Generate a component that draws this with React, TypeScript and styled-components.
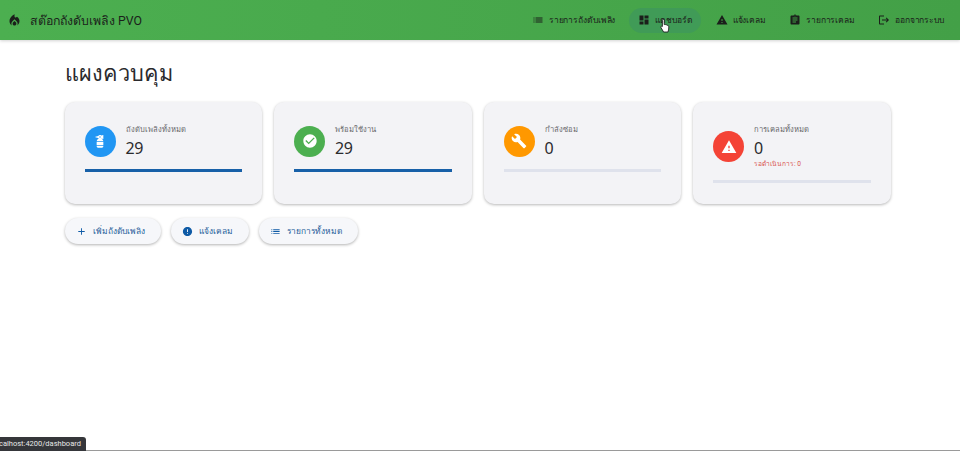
import React from 'react';
import styled, { createGlobalStyle } from 'styled-components';
import {
  MdAdd,
  MdAssignment,
  MdBuild,
  MdCheckCircle,
  MdDashboard,
  MdError,
  MdFireExtinguisher,
  MdList,
  MdLocalFireDepartment,
  MdLogout,
  MdWarning,
} from 'react-icons/md';

const GlobalStyle = createGlobalStyle`
  html, body {
    margin: 0;
    padding: 0;
    background: #fff;
    overflow: hidden;
  }
  body {
    font-family: "Roboto", "Noto Sans", sans-serif;
  }
`;

const Page = styled.div`
  position: relative;
  width: 960px;
  height: 451px;
  overflow: hidden;
`;

const Toolbar = styled.header`
  display: flex;
  align-items: center;
  justify-content: space-between;
  height: 40px;
  padding: 0 8px 0 7px;
  background: linear-gradient(90deg, #4caf50, #43a047);
  box-shadow: 0 1px 3px rgba(0, 0, 0, 0.18);
  color: #1b1f1b;
`;

const Brand = styled.div`
  display: flex;
  align-items: center;
  gap: 8px;
  font-size: 12.3px;
  svg { font-size: 15px; }
`;

const Nav = styled.nav`
  display: flex;
  align-items: center;
  gap: 6px;
`;

const NavItem = styled.a<{ $active?: boolean }>`
  display: flex;
  align-items: center;
  gap: 5px;
  height: 25px;
  padding: 0 8px 0 9px;
  border-radius: 13px;
  font-size: 8.5px;
  font-weight: 500;
  letter-spacing: -0.1px;
  white-space: nowrap;
  background: ${(p) => (p.$active ? '#409b57' : 'transparent')};
  svg { font-size: 12px; flex: none; }
`;

const Main = styled.main`
  padding: 17px 69.5px 0 64.5px;
`;

const Title = styled.h1`
  margin: 0 0 11px;
  height: 34px;
  font-size: 21.7px;
  line-height: 34px;
  font-weight: 400;
  color: #2a2a2d;
`;

const Cards = styled.section`
  display: grid;
  grid-template-columns: repeat(4, 1fr);
  gap: 12px;
`;

const Card = styled.article`
  height: 102px;
  padding: 21px 20px 0;
  box-sizing: border-box;
  border-radius: 10px;
  background: #f3f3f6;
  box-shadow: 0 1px 3px rgba(0, 0, 0, 0.28);
`;

const CardRow = styled.div`
  display: flex;
  align-items: center;
  gap: 10px;
`;

const IconCircle = styled.div<{ $color: string }>`
  display: flex;
  align-items: center;
  justify-content: center;
  width: 31px;
  height: 31px;
  border-radius: 50%;
  flex: none;
  color: #fff;
  background: ${(p) => p.$color};
  svg { font-size: 16px; }
`;

const Label = styled.div`
  margin-bottom: 1px;
  font-size: 7.6px;
  line-height: 13px;
  color: #68686c;
`;

const Value = styled.div`
  font-family: "Noto Sans", sans-serif;
  font-size: 16px;
  line-height: 22px;
  letter-spacing: -0.5px;
  color: #2b2b2e;
`;

const Sub = styled.div`
  font-size: 6.6px;
  line-height: 11px;
  color: #d9534f;
`;

const Bar = styled.div<{ $full: boolean }>`
  height: 3px;
  margin-top: 10px;
  background: ${(p) => (p.$full ? '#1760a8' : '#dfe2ec')};
`;

const Actions = styled.div`
  display: flex;
  gap: 10px;
  margin-top: 14px;
`;

const ActionButton = styled.button`
  display: flex;
  align-items: center;
  gap: 6px;
  height: 26px;
  padding: 0 15.5px 0 11.5px;
  border: none;
  border-radius: 13px;
  background: #f6f7fa;
  box-shadow: 0 1px 3px rgba(0, 0, 0, 0.3);
  color: #1d5c99;
  font-family: inherit;
  font-size: 8.4px;
  font-weight: 500;
  svg { font-size: 11px; color: #0f5ba6; }
`;

const StatusTip = styled.div`
  position: absolute;
  left: 0;
  bottom: 0;
  height: 14px;
  padding: 0 5px 0 0;
  border-top-right-radius: 3px;
  background: #35363a;
  color: #e8e8e8;
  font-size: 7.5px;
  line-height: 14px;
  text-indent: -1px;
`;

const BottomLine = styled.div`
  position: absolute;
  left: 0;
  right: 0;
  bottom: 0;
  height: 1px;
  background: #9a9a9a;
`;

const Cursor = styled.svg`
  position: absolute;
  left: 660px;
  top: 18px;
  width: 11px;
  height: 15px;
`;

const navItems = [
  { icon: <MdList />, text: 'รายการถังดับเพลิง' },
  { icon: <MdDashboard />, text: 'แดชบอร์ด', active: true },
  { icon: <MdWarning />, text: 'แจ้งเคลม' },
  { icon: <MdAssignment />, text: 'รายการเคลม' },
  { icon: <MdLogout />, text: 'ออกจากระบบ' },
];

const stats = [
  { icon: <MdFireExtinguisher />, color: '#2196f3', label: 'ถังดับเพลิงทั้งหมด', value: 29, full: true },
  { icon: <MdCheckCircle />, color: '#4caf50', label: 'พร้อมใช้งาน', value: 29, full: true },
  { icon: <MdBuild />, color: '#ff9800', label: 'กำลังซ่อม', value: 0, full: false },
  { icon: <MdWarning />, color: '#f44336', label: 'การเคลมทั้งหมด', value: 0, full: false, sub: 'รอดำเนินการ: 0' },
];

const actions = [
  { icon: <MdAdd />, text: 'เพิ่มถังดับเพลิง' },
  { icon: <MdError />, text: 'แจ้งเคลม' },
  { icon: <MdList />, text: 'รายการทั้งหมด' },
];

const App = () => {
  return (
    <Page>
      <GlobalStyle />
      <Toolbar>
        <Brand>
          <MdLocalFireDepartment />
          <span>สต๊อกถังดับเพลิง PVO</span>
        </Brand>
        <Nav>
          {navItems.map((item) => (
            <NavItem key={item.text} $active={item.active}>
              {item.icon}
              {item.text}
            </NavItem>
          ))}
        </Nav>
      </Toolbar>
      <Main>
        <Title>แผงควบคุม</Title>
        <Cards>
          {stats.map((s) => (
            <Card key={s.label}>
              <CardRow>
                <IconCircle $color={s.color}>{s.icon}</IconCircle>
                <div>
                  <Label>{s.label}</Label>
                  <Value>{s.value}</Value>
                  {s.sub && <Sub>{s.sub}</Sub>}
                </div>
              </CardRow>
              <Bar $full={s.full} />
            </Card>
          ))}
        </Cards>
        <Actions>
          {actions.map((a) => (
            <ActionButton key={a.text}>
              {a.icon}
              {a.text}
            </ActionButton>
          ))}
        </Actions>
      </Main>
      <BottomLine />
      <StatusTip>calhost:4200/dashboard</StatusTip>
      <Cursor viewBox="0 0 11 15">
        <path
          d="M3 1.2c.7 0 1.2.5 1.2 1.2v4.2l.6-.1c.5-.1 1 .1 1.2.4.5-.2 1.1 0 1.3.4.6-.2 1.3.2 1.4.8.1 1 .1 2.6-.2 3.8L8 14H3.6L1 9.600c-.3-.6-.1-1.100.3-1.300.4-.2.8-.1 1.100.2V2.400C1.800 1.700 2.300 1.200 3 1.200z"
          fill="#fff"
          stroke="#111"
          strokeWidth="0.8"
        />
      </Cursor>
    </Page>
  );
};

export default App;
